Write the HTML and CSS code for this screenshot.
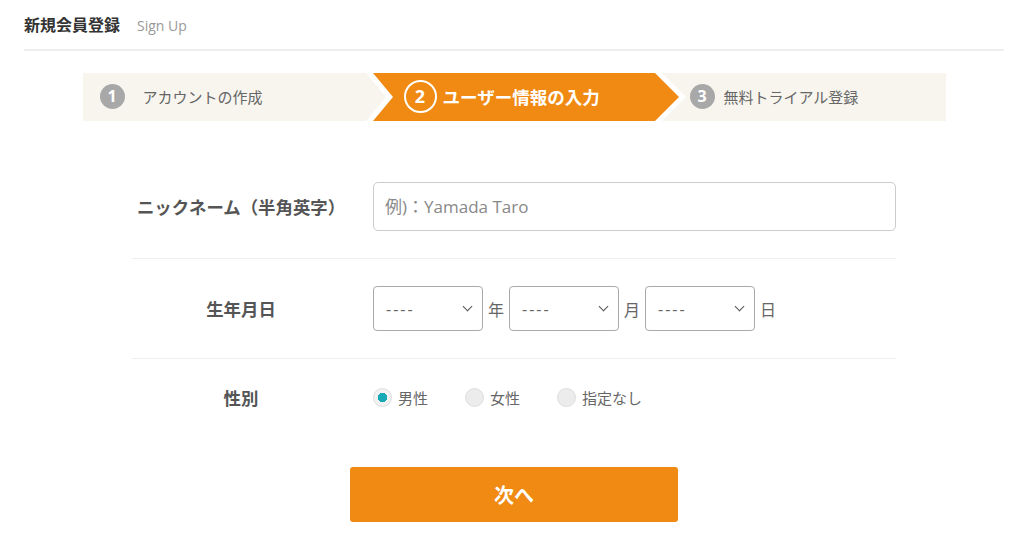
FILE: index.html
```html
<!DOCTYPE html>
<html lang="ja">
<head>
  <meta charset="UTF-8" />
  <meta name="viewport" content="width=device-width, initial-scale=1.0" />
  <title>新規会員登録</title>
  <link rel="stylesheet" href="styles.css">
</head>
<body>
  <div class="page-head">
    <h1>新規会員登録</h1>
    <span class="sub">Sign Up</span>
  </div>

  <ol class="steps">
    <li class="step">
      <span class="num">1</span>アカウントの作成
    </li>
    <li class="step step-active">
      <svg class="step-bg" viewBox="0 0 320 48" preserveAspectRatio="none">
        <polygon points="0,0 296,0 320,24 296,48 0,48 20,24" fill="#fff" />
        <polygon points="7,0 289,0 313,24 289,48 7,48 27,24" fill="#f08a12" />
      </svg>
      <span class="num">2</span>ユーザー情報の入力
    </li>
    <li class="step step-last">
      <span class="num">3</span>無料トライアル登録
    </li>
  </ol>

  <form class="signup" onsubmit="return false;">
    <div class="row">
      <label class="row-label" for="nick">ニックネーム（半角英字）</label>
      <div class="row-field">
        <input type="text" id="nick" placeholder="例)：Yamada Taro" />
      </div>
    </div>

    <div class="row">
      <label class="row-label">生年月日</label>
      <div class="row-field dates">
        <div class="sel"><select><option>----</option></select></div>
        <span class="unit">年</span>
        <div class="sel"><select><option>----</option></select></div>
        <span class="unit">月</span>
        <div class="sel"><select><option>----</option></select></div>
        <span class="unit">日</span>
      </div>
    </div>

    <div class="row">
      <label class="row-label">性別</label>
      <div class="row-field radios">
        <label class="radio"><input type="radio" name="sex" checked />男性</label>
        <label class="radio"><input type="radio" name="sex" />女性</label>
        <label class="radio"><input type="radio" name="sex" />指定なし</label>
      </div>
    </div>

    <button type="submit" class="next">次へ</button>
  </form>
</body>
</html>
```

FILE: styles.css
```css
body {
  margin: 0; padding: 0 20px 0 24px;
  font-family: "Open Sans", "Noto Sans CJK JP", sans-serif;
  color: #555; background: #fff;
}

.page-head {
  display: flex; align-items: baseline; gap: 17px;
  padding: 14px 0 13px; border-bottom: 2px solid #eee;
}
.page-head h1 { margin: 0; font-size: 16px; line-height: 22px; font-weight: bold; color: #333; }
.page-head .sub { font-size: 14px; color: #999; }

.steps {
  display: flex; width: 863px; height: 48px;
  margin: 22px auto 0; padding: 0; list-style: none;
  background: #f7f5ee;
}
.step {
  display: flex; align-items: center; padding-bottom: 2px; box-sizing: border-box;
  font-family: "Noto Sans CJK JP", sans-serif;
  font-size: 15px; color: #666;
}
.step .num {
  display: inline-flex; align-items: center; justify-content: center;
  width: 25px; height: 25px; border-radius: 50%;
  background: #a8a8a8; color: #fff;
  font-family: "Open Sans", sans-serif; font-size: 16px; font-weight: bold;
}
.step:first-child { width: 283px; padding-left: 17px; }
.step:first-child .num { margin-right: 18px; }

.step-active {
  position: relative; z-index: 0; width: 320px; flex: none;
  padding-left: 38px;
  color: #fff; font-size: 17.5px; font-weight: bold;
}
.step-bg { position: absolute; left: 0; top: 0; width: 100%; height: 100%; z-index: -1; }
.step-active .num {
  width: 29px; height: 29px;
  background: none; border: 2px solid #fff;
  font-size: 18px; margin-right: 6px;
}

.step-last { padding-left: 4px; }
.step-last .num { margin-right: 9px; }

.signup { width: 764px; margin: 37px auto 0; }
.row {
  display: grid; grid-template-columns: 218px 1fr; column-gap: 23px;
  align-items: center; padding: 24px 0 27px;
  border-bottom: 1px solid #eee;
}
.row:nth-child(2) { padding: 27px 0 27px; }
.row:nth-child(3) { padding: 26px 0 29px; border-bottom: none; }
.row-label {
  text-align: center; font-family: "Noto Sans CJK JP", sans-serif;
  font-size: 17.4px; font-weight: bold; color: #555;
}

.row-field input[type="text"] {
  width: 100%; height: 49px; box-sizing: border-box;
  padding: 0 11px; border: 1px solid #ccc; border-radius: 5px;
  font-family: "Open Sans", "Noto Sans CJK JP", sans-serif; font-size: 17px; color: #333;
}
.row-field input::placeholder { color: #888; }

.dates { display: flex; align-items: center; gap: 5px; }
.sel { position: relative; width: 110px; flex: none; }
.sel select {
  appearance: none; -webkit-appearance: none;
  width: 100%; height: 45px; padding: 0 12px;
  border: 1px solid #aaa; border-radius: 4px; background: #fff;
  font-family: "Open Sans", sans-serif; font-size: 16px; letter-spacing: 2px; color: #666;
}
.sel::after {
  content: ""; position: absolute; right: 12px; top: 17px;
  width: 6px; height: 6px;
  border-right: 1.5px solid #555; border-bottom: 1.5px solid #555;
  transform: rotate(45deg); pointer-events: none;
}
.unit { width: 16px; flex: none; font-size: 16px; color: #666; font-family: "Noto Sans CJK JP", sans-serif; }

.radios { display: flex; align-items: center; gap: 37px; }
.radio {
  display: flex; align-items: center; gap: 6px;
  font-family: "Noto Sans CJK JP", sans-serif; font-size: 15px; color: #666;
}
.radio input {
  appearance: none; -webkit-appearance: none; margin: 0;
  width: 19px; height: 19px; border-radius: 50%;
  border: 1px solid #ddd; background: #ececec;
}
.radio input:checked {
  background: radial-gradient(circle, #17a9b5 0 4.5px, #f2f2f2 5px);
}

.next {
  display: block; width: 328px; height: 55px; margin: 28px auto 0;
  border: none; border-radius: 3px; background: #f08a12; color: #fff;
  font-family: "Noto Sans CJK JP", sans-serif; font-size: 20px; font-weight: bold;
  cursor: pointer;
}
```
